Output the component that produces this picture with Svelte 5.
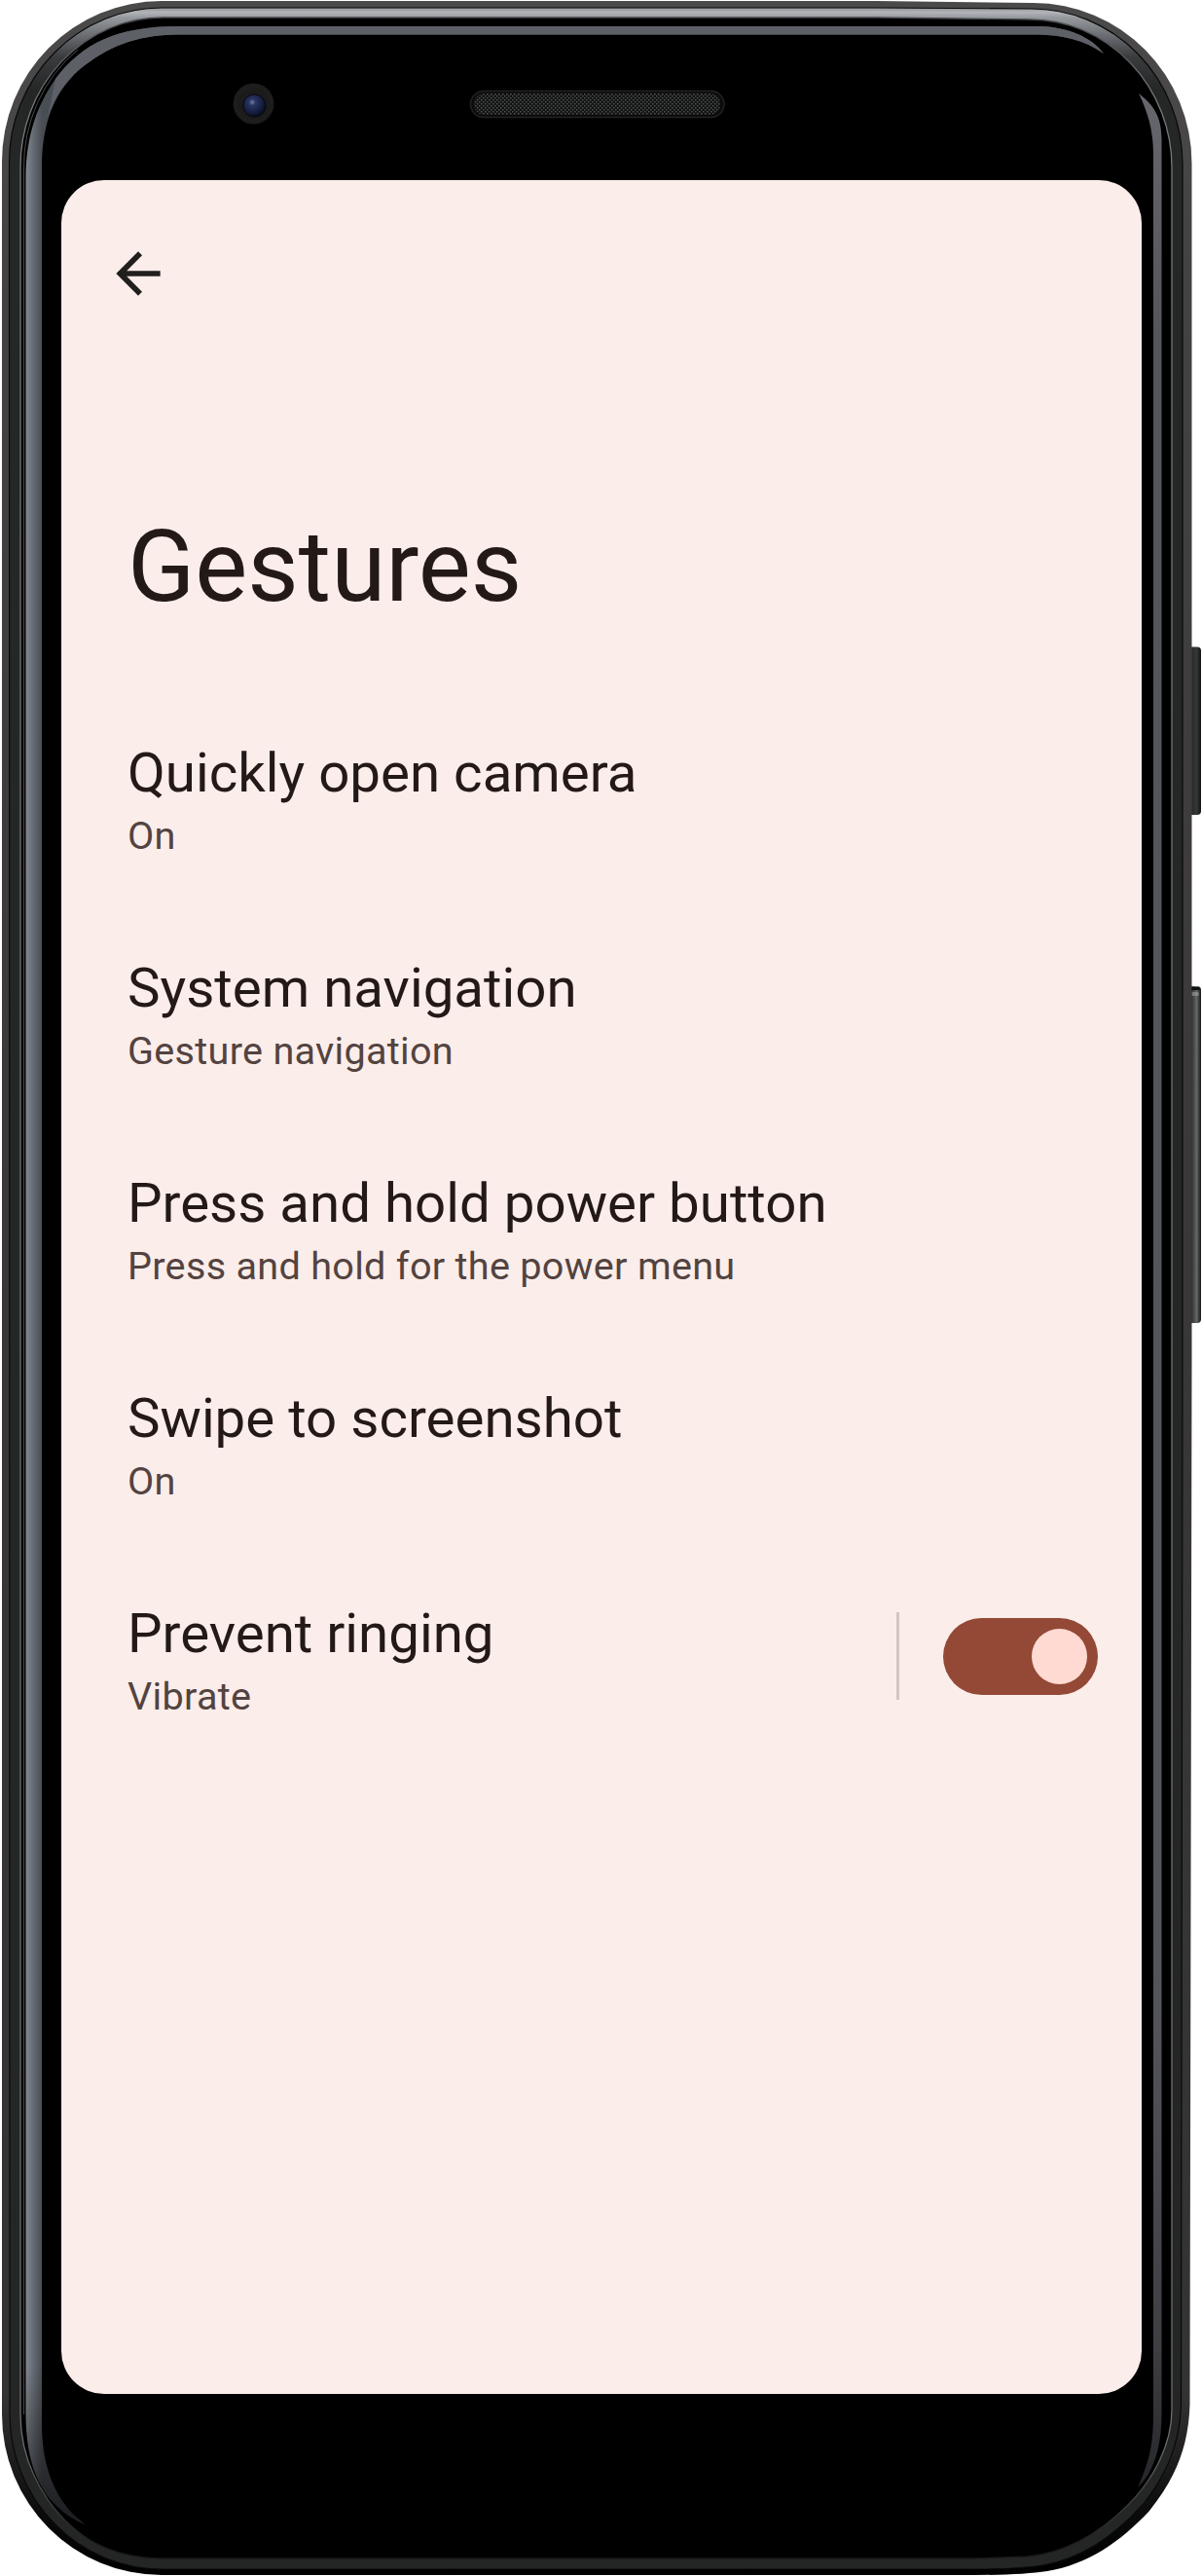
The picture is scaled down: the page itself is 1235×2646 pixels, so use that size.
<script>
  const items = [
    { title: 'Quickly open camera', summary: 'On' },
    { title: 'System navigation', summary: 'Gesture navigation' },
    { title: 'Press and hold power button', summary: 'Press and hold for the power menu' },
    { title: 'Swipe to screenshot', summary: 'On' },
    { title: 'Prevent ringing', summary: 'Vibrate', toggle: true }
  ];
  let ringing = $state(true);
</script>

<div class="device">
  <svg class="frame" viewBox="0 0 1235 2646" aria-hidden="true">
    <defs>
      <linearGradient id="shell" gradientUnits="userSpaceOnUse" x1="0" y1="0" x2="0" y2="2646">
        <stop offset="0" stop-color="#4b4a4a" />
        <stop offset=".1" stop-color="#454243" />
        <stop offset=".5" stop-color="#3a3738" />
        <stop offset=".93" stop-color="#343233" />
        <stop offset=".98" stop-color="#080808" />
        <stop offset="1" stop-color="#000" />
      </linearGradient>
      <linearGradient id="band" gradientUnits="userSpaceOnUse" x1="0" y1="0" x2="0" y2="2646">
        <stop offset=".003" stop-color="#8f9195" />
        <stop offset=".0048" stop-color="#b2b4b8" />
        <stop offset=".0068" stop-color="#96999e" />
        <stop offset=".013" stop-color="#6f7277" />
        <stop offset=".022" stop-color="#3a3c3e" />
        <stop offset=".035" stop-color="#252626" />
        <stop offset="1" stop-color="#242525" />
      </linearGradient>
      <linearGradient id="edge" gradientUnits="userSpaceOnUse" x1="0" y1="0" x2="0" y2="2646">
        <stop offset="0" stop-color="#3c3d40" />
        <stop offset=".04" stop-color="#77797c" />
        <stop offset=".95" stop-color="#6c6d6f" />
        <stop offset=".985" stop-color="#202020" />
        <stop offset="1" stop-color="#111" />
      </linearGradient>
      <linearGradient id="glassLeft" gradientUnits="userSpaceOnUse" x1="26" y1="0" x2="43" y2="0">
        <stop offset="0" stop-color="#858b92" />
        <stop offset=".25" stop-color="#747a82" />
        <stop offset="1" stop-color="#494d54" />
      </linearGradient>
      <linearGradient id="glassFoot" gradientUnits="userSpaceOnUse" x1="0" y1="2430" x2="0" y2="2595">
        <stop offset="0" stop-color="#000" stop-opacity="0" />
        <stop offset="1" stop-color="#000" stop-opacity=".65" />
      </linearGradient>
      <linearGradient id="glassRight" gradientUnits="userSpaceOnUse" x1="0" y1="96" x2="0" y2="2556">
        <stop offset="0" stop-color="#66676d" />
        <stop offset=".1" stop-color="#54565b" />
        <stop offset=".8" stop-color="#53555a" />
        <stop offset=".94" stop-color="#3e3f43" />
        <stop offset="1" stop-color="#252629" />
      </linearGradient>
      <linearGradient id="button">
        <stop offset="0" stop-color="#111" />
        <stop offset=".35" stop-color="#292a2a" />
        <stop offset=".7" stop-color="#353636" />
        <stop offset="1" stop-color="#111" />
      </linearGradient>
      <linearGradient id="rocker">
        <stop offset="0" stop-color="#111" />
        <stop offset=".35" stop-color="#303131" />
        <stop offset=".7" stop-color="#656666" />
        <stop offset="1" stop-color="#151515" />
      </linearGradient>
      <radialGradient id="lens" cx=".4" cy=".35" r=".65">
        <stop offset="0" stop-color="#7682a8" />
        <stop offset=".22" stop-color="#2a3663" />
        <stop offset=".65" stop-color="#172145" />
        <stop offset="1" stop-color="#090d1c" />
      </radialGradient>
      <pattern id="mesh" width="4" height="4" patternUnits="userSpaceOnUse">
        <rect width="4" height="4" fill="#111212" />
        <rect x="0" y="0" width="1.5" height="1.5" fill="#515453" />
        <rect x="2" y="2" width="1.5" height="1.5" fill="#515453" />
      </pattern>
    </defs>

    <rect x="1219" y="664.5" width="15" height="172.500" rx="4" fill="url(#button)" />
    <rect x="1219" y="1013" width="15" height="346" rx="4" fill="url(#rocker)" />
    <rect x="1222" y="1014" width="11" height="3" rx="1.500" fill="#111" />
    <rect x="1224" y="1019" width="8" height="4" rx="2" fill="#aaa" opacity=".55" />

    <path fill="url(#shell)" d="M2 166A164 165 0 0 1 166 1H900L1062 3A163 165 0 0 1 1224.500 168V1400L1222.500 2470C1221 2515 1207 2546 1181 2579C1151 2611 1118 2634 1076 2641Q1050 2645 1000 2645H166A164 165 0 0 1 2 2480Z" />
    <path fill="url(#band)" stroke="#090909" stroke-width="1.200" d="M9.500 167A157 159 0 0 1 166 8H900L1060 9A155 160 0 0 1 1215 168V1400L1213.500 2470C1212 2510 1200 2540 1174 2573C1145 2605 1112 2628 1072 2635Q1046 2639 1000 2639H166A156 160 0 0 1 10 2480Z" />
    <path fill="#000" stroke="url(#edge)" stroke-width="1.300" d="M21 172A146 153 0 0 1 167 18H900L1058 20A146 152 0 0 1 1204 172V2475C1204 2510 1186 2546 1159 2573C1130 2602 1096 2622 1056 2626L1000 2628H166C110 2627 76 2605 50 2569C30 2540 21 2510 21 2480Z" />
    <path fill="none" stroke="#4b4c4e" d="M24.500 2480V174A143 152 0 0 1 80 51" />

    <path fill="url(#glassLeft)" d="M26.500 2480V182C27 137 39 107 57 81C84 45 120 27 183 27H1070C1096 28 1122 38 1134 55C1114 41 1092 36 1066 35.500H183C137 36 110 49 82 71C56 95 43 125 43 173V2490C43 2540 60 2573 87 2593C46 2575 27 2540 26.500 2480Z" />
    <path fill="#5e6067" d="M57 81C84 45 120 27 183 27H1070C1096 28 1122 38 1134 55C1114 41 1092 36 1066 35.500H183C137 36 110 49 82 71C66 85 55 101 49 121Z" />
    <path fill="url(#glassFoot)" d="M26 2430H43.500V2490C43 2540 60 2573 88 2594C46 2576 26 2540 26 2480Z" />
    <path fill="url(#glassRight)" d="M1170 96C1181 105 1193.500 115 1193.500 143V2480C1193.500 2518 1183 2542 1169 2555C1180 2530 1185 2513 1185 2480V158C1185 133 1179 115 1170 96Z" />

    <circle cx="260.500" cy="106.500" r="21" fill="#1b1b1c" />
    <circle cx="260.500" cy="106.500" r="18" fill="none" stroke="#242425" stroke-width="3" stroke-dasharray="1 2" />
    <circle cx="261.500" cy="108.500" r="11.500" fill="url(#lens)" stroke="#07080b" />

    <rect x="483.500" y="93.500" width="260.500" height="27" rx="13.500" fill="#0c0c0d" stroke="#222226" stroke-width="1.500" />
    <rect x="487" y="96" width="253" height="22" rx="11" fill="url(#mesh)" />
  </svg>

  <main class="screen">
    <button class="back" aria-label="Back">
      <svg viewBox="0 0 24 24"><path d="M20 11H7.830l5.590-5.590L12 4l-8 8 8 8 1.410-1.410L7.830 13H20z" /></svg>
    </button>
    <h1>Gestures</h1>
    <ul>
      {#each items as item}
        <li>
          <div class="label">
            <h2>{item.title}</h2>
            <p>{item.summary}</p>
          </div>
          {#if item.toggle}
            <div class="control">
              <button
                class="switch"
                class:on={ringing}
                role="switch"
                aria-checked={ringing}
                aria-label={item.title}
                onclick={() => (ringing = !ringing)}
              ><span></span></button>
            </div>
          {/if}
        </li>
      {/each}
    </ul>
  </main>
</div>

<style>
  :global(body) {
    background: #fff;
  }
  .device {
    position: relative;
    box-sizing: border-box;
    width: 1235px;
    height: 2646px;
    padding: 185px 62px 187px 63px;
    overflow: hidden;
    font-family: Roboto, 'Liberation Sans', sans-serif;
  }
  .frame {
    position: absolute;
    inset: 0;
    width: 1235px;
    height: 2646px;
  }
  .screen {
    position: relative;
    box-sizing: border-box;
    width: 1110px;
    height: 2274px;
    padding: 62px 45px 0 68px;
    border-radius: 44px;
    background: #fbedea;
    color: #231917;
  }
  button {
    display: block;
    border: 0;
    padding: 0;
    background: none;
  }
  .back {
    width: 68px;
    height: 68px;
    margin-left: -23.500px;
  }
  .back svg {
    display: block;
    fill: #211f1e;
  }
  h1,
  h2,
  p,
  ul {
    margin: 0;
    padding: 0;
    font-weight: 400;
  }
  h1 {
    margin-top: 208px;
    font-size: 101.800px;
    line-height: 120px;
  }
  ul {
    display: flex;
    flex-direction: column;
    gap: 100px;
    margin-top: 118px;
    list-style: none;
  }
  li {
    display: flex;
    align-items: flex-start;
    justify-content: space-between;
    height: 121px;
  }
  h2 {
    font-size: 56.430px;
    line-height: 66px;
  }
  p {
    margin-top: 8.500px;
    color: #534340;
    font-size: 39.600px;
    line-height: 46px;
    letter-spacing: 0.3px;
  }
  .control {
    display: flex;
    align-items: center;
    height: 90px;
    margin-top: 11px;
    padding-left: 45px;
    border-left: 3px solid #d3c5c2;
  }
  .switch {
    display: flex;
    align-items: center;
    box-sizing: border-box;
    width: 159px;
    height: 79px;
    padding: 0 11.500px;
    border-radius: 40px;
    background: #85736f;
  }
  .switch.on {
    justify-content: flex-end;
    background: #934936;
  }
  .switch span {
    width: 57px;
    height: 57px;
    border-radius: 50%;
    background: #ffdad2;
  }
</style>
